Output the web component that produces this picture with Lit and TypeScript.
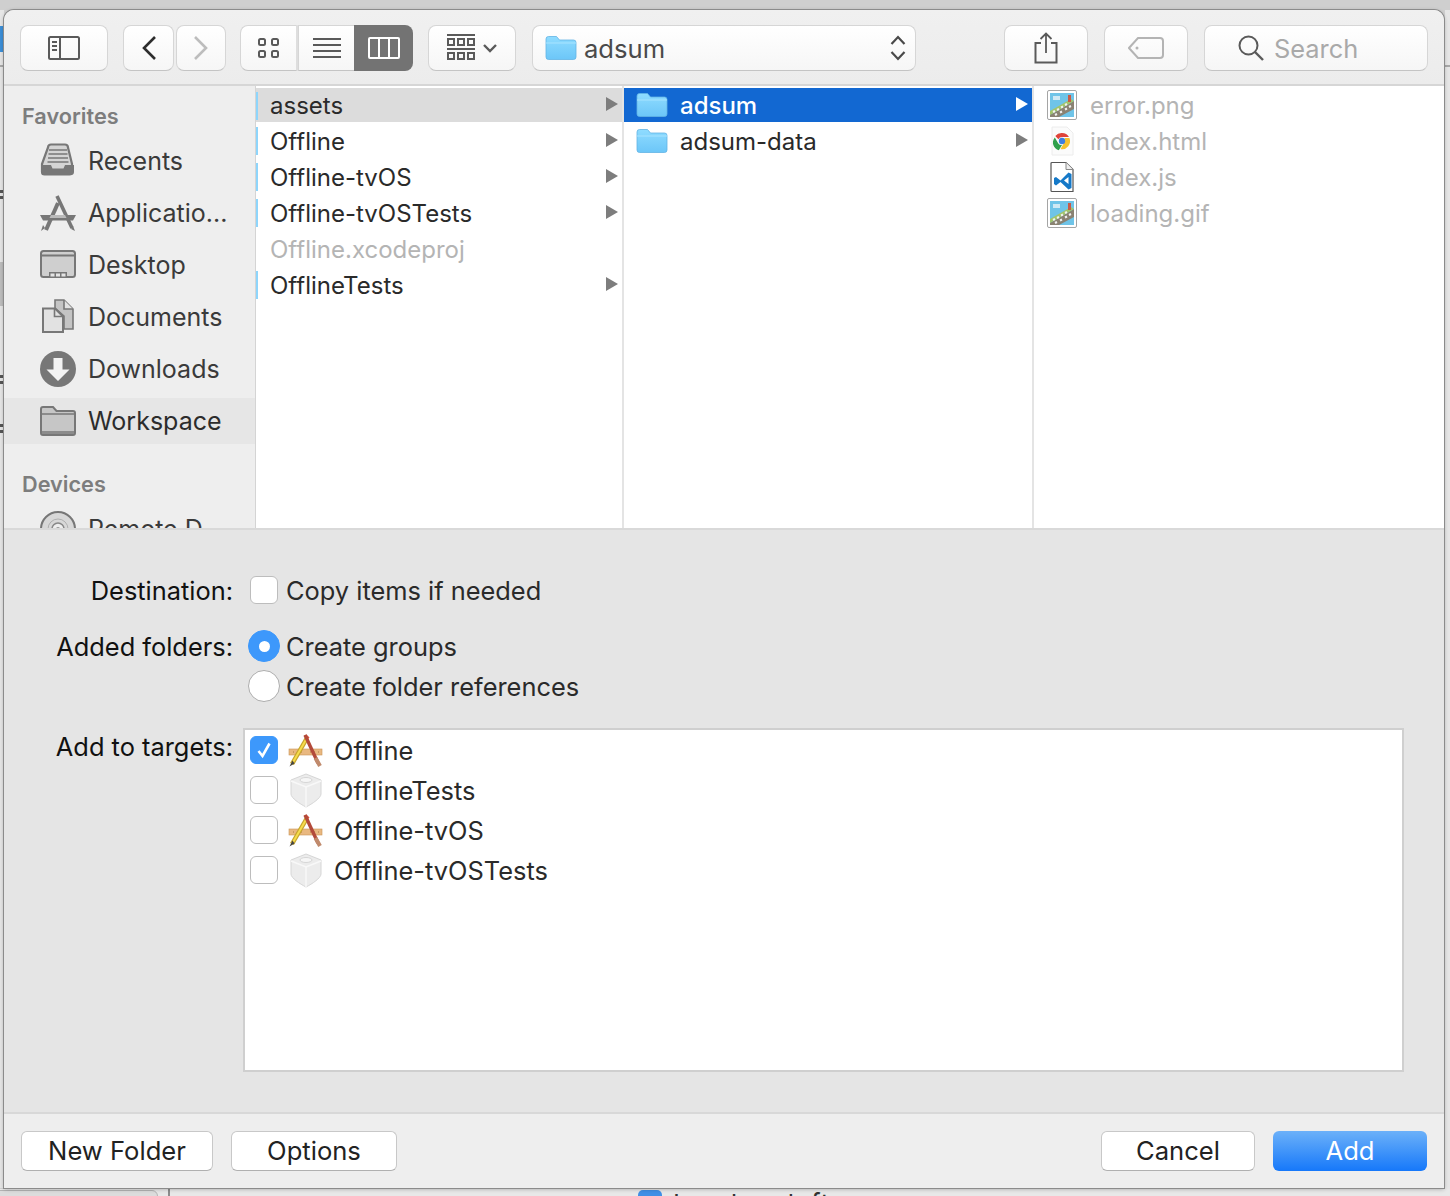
import { LitElement, html, css, svg } from "lit";
import { customElement } from "lit/decorators.js";

const folderBlue = html`<svg width="32" height="26" viewBox="0 0 32 26"><defs><linearGradient id="fb" x1="0" y1="0" x2="0" y2="1"><stop offset="0" stop-color="#8fdcff"/><stop offset="1" stop-color="#6cc6f8"/></linearGradient></defs><path d="M1 4a2.500 2.500 0 0 1 2.500-2.500h8L14.500 5H28.500A2.500 2.500 0 0 1 31 7.500V22a2.500 2.500 0 0 1-2.500 2.500h-25A2.500 2.500 0 0 1 1 22Z" fill="url(#fb)" stroke="#62b4e4" stroke-width=".8"/><path d="M1 8h30" stroke="#a8e4ff" stroke-width="1"/></svg>`;

const sideIcons: Record<string, unknown> = {
  recents: svg`<path d="M8 4.500a3 3 0 0 1 3-3h14a3 3 0 0 1 3 3L32 21v8a2.500 2.500 0 0 1-2.500 2.500h-25A2.500 2.500 0 0 1 2 29v-8Z" fill="#d4d4d4" stroke="#777" stroke-width="2.200"/><path d="M9 7h18M8.500 11h19M8 15h20M7.500 19h21" stroke="#777" stroke-width="1.600"/><path d="M2 22h9l1.500 3.500h11L25 22h9v7a3 3 0 0 1-3 3H5a3 3 0 0 1-3-3Z" fill="#777"/>`,
  apps: svg`<path d="M0 20h36l-3 5.500H3Z" fill="#777"/><path d="M18 8 6 35" stroke="#777" stroke-width="4"/><path d="M17 1 32 33" stroke="#777" stroke-width="3.600"/><path d="M3 30 1 36l4-3ZM33 31l2 5-4-2Z" fill="#777"/><path d="M11 20h14l1.500 3h-17Z" fill="#bbb"/>`,
  desktop: svg`<rect x="1" y="4" width="34" height="26" rx="2.500" fill="#cfcfcf" stroke="#777" stroke-width="2"/><path d="M1 8.500h34" stroke="#777" stroke-width="2.200"/><path d="M9 25h18v5H9Z" fill="#777"/><path d="M10.500 26.500h4v3h-4zM16 26.500h4v3h-4zM21.500 26.500h4v3h-4z" fill="#e4e4e4"/>`,
  docs: svg`<path d="M15 1h9l9 9v20H24V17l-9-8Z" fill="#c4c4c4" stroke="#777" stroke-width="1.600"/><path d="M24 1v9h9" fill="#e2e2e2" stroke="#777" stroke-width="1.600"/><path d="M3 9.500h12l8 8V33H3Z" fill="#e2e2e2" stroke="#777" stroke-width="2"/><path d="M14.500 9.500v8h8.500" fill="none" stroke="#777" stroke-width="1.600"/>`,
  downloads: svg`<circle cx="18" cy="18" r="18" fill="#777"/><path d="M13.500 7h9v11.500h7L18 30 6.500 18.500h7Z" fill="#f3f3f3"/>`,
  folder: svg`<path d="M1 6a2 2 0 0 1 2-2h10l3.500 4H33a2 2 0 0 1 2 2v20a2 2 0 0 1-2 2H3a2 2 0 0 1-2-2Z" fill="#c6c6c6" stroke="#777" stroke-width="2"/><path d="M1 11h34" stroke="#777" stroke-width="1.600"/><path d="M2 28h32v3H2Z" fill="#8c8c8c"/>`,
  disc: svg`<circle cx="18" cy="18" r="17" fill="#d8d8d8" stroke="#777" stroke-width="2"/><circle cx="18" cy="18" r="10" fill="none" stroke="#b0b0b0" stroke-width="1"/><circle cx="18" cy="18" r="6" fill="#eee" stroke="#888" stroke-width="1.500"/><circle cx="18" cy="18" r="2" fill="#999"/>`,
};

const sideIcon = (k: string) => html`<svg class="sicon" width="36" height="36" viewBox="0 0 36 36">${sideIcons[k]}</svg>`;

const thumb = html`<svg width="30" height="30" viewBox="0 0 30 30"><rect x=".5" y=".5" width="29" height="29" rx="1.500" fill="#fff" stroke="#a5a5a5"/><rect x="3" y="3" width="24" height="24" fill="#6fc4e8"/><path d="M3 25 27 11v8L12 27H3Z" fill="#8a8272"/><path d="M3 21 24 9l3 2L3 25Z" fill="#a3c46a"/><path d="M6 22l2-1M10 20l2-1M14 17.500l2-1M18 15l2-1M8 25l2-1M13 22.500l2-1M18 19.500l2-1M22 17l2-1" stroke="#f2f2f2" stroke-width="2"/><rect x="21" y="5" width="3" height="7" fill="#c95a46"/><path d="M6 6h7v4H6Z" fill="#cfe9f4"/></svg>`;

const chromeIcon = html`<svg width="30" height="30" viewBox="0 0 30 30"><path d="M5 1h15l6 6v22H5Z" fill="#fbfbfb" stroke="#ececec"/><path d="M15 7a8 8 0 0 1 7 4h-7a4 4 0 0 0-3.600 2.300L8.300 10A8 8 0 0 1 15 7Z" fill="#e0443a"/><path d="M7.800 11.500l3.500 6A4 4 0 0 0 15 19l-3.200 5.300A8 8 0 0 1 7.800 11.500Z" fill="#2fa04c"/><path d="M22.400 12a8 8 0 0 1-8.900 11l3.500-6a4 4 0 0 0 .300-5Z" fill="#f6c22d"/><circle cx="15" cy="15" r="3.200" fill="#3c7fe0"/></svg>`;

const codeIcon = html`<svg width="30" height="32" viewBox="0 0 30 32"><path d="M5 1.500h14l7 7V30.500H5a1 1 0 0 1-1-1V2.500a1 1 0 0 1 1-1Z" fill="#fff" stroke="#555" stroke-width="1.200"/><path d="M19 1.500v7h7" fill="#eee" stroke="#888"/><path d="M21.500 11.500 24.500 13v14l-3 1.500-8-7.500-4.500 3.500L7 23V17l2-1 4.500 3.500ZM21.500 16l-4.500 3.500 4.500 3.500Z" fill="#1579c8" fill-rule="evenodd"/></svg>`;

const appIcon = html`<svg class="t" width="36" height="34" viewBox="0 0 36 34"><rect x="1" y="16" width="33" height="6" fill="#e9b880" stroke="#c99458" stroke-width=".6"/><path d="M5 19h1M9 19h1M13 19h1M22 19h1M26 19h1M30 19h1" stroke="#a87a44"/><path d="M19 5 4 31" stroke="#c7a52e" stroke-width="4.500"/><path d="M19 5 4 31" stroke="#f6dc4c" stroke-width="2"/><path d="M4.500 27.500 1.500 33.500l5-3Z" fill="#444"/><path d="M20 6 16 2.500l2.500-1 3 3Z" fill="#d84c3c"/><path d="M17 2 30 30" stroke="#b34a3a" stroke-width="3.400"/><path d="M27.500 25 32 33" stroke="#c08a6c" stroke-width="4"/></svg>`;

const testIcon = html`<svg class="t" width="36" height="36" viewBox="0 0 36 36"><path d="M18 2 33 8v14c0 4-9 10-15 13C12 32 3 26 3 22V8Z" fill="#ececec" stroke="#d6d6d6"/><path d="M3 9l15 6 15-6M18 15v20" fill="none" stroke="#f8f8f8" stroke-width="1.500"/><ellipse cx="18" cy="8" rx="6" ry="2.500" fill="#f6f6f6" stroke="#d6d6d6"/></svg>`;

@customElement("app-root")
export class AppRoot extends LitElement {
  static styles = css`
    :host { display: block; width: 1450px; height: 1196px; position: relative; overflow: hidden; background: #cfcfcf; font-family: "Inter", "Roboto", "Liberation Sans", sans-serif; }
    * { box-sizing: border-box; }
    .bg { position: absolute; inset: 0; overflow: hidden; }
    .bg span { position: absolute; display: block; }
    .bg .tab { left: -6px; top: 1190px; width: 164px; height: 20px; background: #dcdcdc; border: 1px solid #b4b4b4; border-radius: 6px; }
    .bg .vl { left: 168px; top: 1189px; width: 2px; height: 7px; background: #8c8c8c; }
    .bg .cb { left: 638px; top: 1190px; width: 24px; height: 20px; background: #3f8fe6; border-radius: 5px; }
    .bg .under { left: 673px; top: 1189px; font-size: 26px; line-height: 30px; color: #333; letter-spacing: 1px; white-space: nowrap; }
    .bg .blue { left: 0; top: 26px; width: 4px; height: 26px; background: #3c8fd8; }
    .bg .lt { left: 0; top: 10px; width: 4px; height: 1178px; background: #e6e6e6; }
    .bg .mk { left: 0; width: 4px; height: 3px; background: #555; }
    .bg .gr { left: 0; top: 262px; width: 4px; height: 44px; background: #bdbdbd; }
    .bg .rl { left: 1445px; top: 10px; width: 5px; height: 1186px; background: #e6e6e6; }
    .bg .rm { left: 1445px; top: 65px; width: 5px; height: 2px; background: #a8a8a8; }
    .bg .lm { left: 0; top: 65px; width: 4px; height: 2px; background: #a8a8a8; }
    .bg .bot { left: 0; top: 1189px; width: 1450px; height: 7px; background: #e8e8e8; }

    .dialog { position: absolute; left: 4px; top: 10px; width: 1440px; height: 1178px; background: #eee; border-radius: 10px 10px 0 0; display: flex; flex-direction: column; overflow: hidden; box-shadow: 0 0 0 1px #8b8b8b, 0 1px 4px rgba(0,0,0,.3); color: #262626; }

    .toolbar { height: 76px; flex: none; display: flex; align-items: flex-start; padding: 15px 0 0 16px; background: linear-gradient(#f0f0f0, #ececec); border-bottom: 2px solid #d6d6d6; }
    .btn { height: 46px; flex: none; display: flex; align-items: center; justify-content: center; background: linear-gradient(#fff, #f6f6f6); border: 1px solid #d6d6d6; border-bottom-color: #c4c4c4; border-radius: 8px; }
    .b-side { width: 88px; }
    .b-back { width: 51px; margin-left: 15px; }
    .b-fwd { width: 50px; margin-left: 2px; }
    .seg { display: flex; margin-left: 14px; height: 46px; flex: none; }
    .seg .btn { border-radius: 0; border-right: none; }
    .seg .s1 { width: 58px; border-radius: 8px 0 0 8px; border-right: 2px solid #dedede; }
    .seg .s2 { width: 56px; }
    .seg .s3 { width: 59px; background: #737373; border: none; border-radius: 0 8px 8px 0; }
    .b-arr { width: 88px; margin-left: 15px; gap: 8px; }
    .b-path { width: 384px; margin-left: 16px; justify-content: flex-start; padding: 0 9px 0 12px; gap: 7px; font-size: 25.6px; color: #4a4a4a; }
    .b-path .name { flex: 1; }
    .b-share { width: 84px; margin-left: 88px; }
    .b-tag { width: 84px; margin-left: 16px; }
    .b-search { width: 224px; margin-left: 16px; justify-content: flex-start; padding-left: 33px; gap: 10px; font-size: 25.4px; color: #a9a9a9; }

    .browser { height: 444px; flex: none; display: flex; background: #fff; border-bottom: 2px solid #d9d9d9; overflow: hidden; }
    .side { width: 252px; flex: none; background: #eee; padding-top: 15px; overflow: hidden; border-right: 1px solid #d4d4d4; }
    .side h4 { margin: 0; padding-left: 18px; font-size: 21.7px; line-height: 30px; font-weight: 600; color: #7d7d7d; }
    .side .first { margin-top: 4px; }
    .side .devices { margin-top: 25px; }
    .sitem { height: 52px; display: flex; align-items: center; padding-left: 36px; gap: 12px; font-size: 25px; color: #3a3a3a; white-space: nowrap; }
    .sitem.sel { background: #e6e6e6; height: 46px; margin-top: 3px; margin-bottom: 3px; color: #2c2c2c; }
    .sitem.clip { margin-top: 4px; }
    .sicon { flex: none; }
    .col { flex: none; border-right: 2px solid #e4e4e4; padding-top: 1px; }
    .c1 { width: 368px; }
    .c2 { width: 410px; }
    .c3 { flex: 1; border-right: none; }
    .row { height: 36px; display: flex; align-items: center; font-size: 24px; color: #2a2a2a; position: relative; white-space: nowrap; }
    .c1 .row { padding-left: 14px; }
    .c1 .row::before { content: ""; position: absolute; left: 0; top: 4px; width: 2px; height: 28px; background: #8ed5fb; }
    .c1 .row.plain::before { display: none; }
    .row.dim { color: #b4b4b4; }
    .row.act { background: #dcdcdc; height: 34px; margin: 1px 0; }
    .row .arrow { position: absolute; right: 4px; top: 10px; width: 0; height: 0; border-left: 12px solid #7d7d7d; border-top: 7px solid transparent; border-bottom: 7px solid transparent; }
    .row.act .arrow { top: 9px; }
    .c2 .row { padding-left: 12px; gap: 12px; }
    .row.hot { background: #1268d2; color: #fff; height: 34px; margin: 1px 0; font-weight: 500; }
    .row.hot .arrow { border-left-color: #fff; top: 9px; }
    .c3 .row { padding-left: 13px; gap: 13px; }
    .c3 .ic { width: 30px; height: 32px; flex: none; display: flex; align-items: center; justify-content: center; }

    .form { flex: 1; background: #e5e5e5; border-bottom: 2px solid #d8d8d8; padding: 41px 40px 0 0; display: grid; grid-template-columns: 229px 1fr; align-content: start; font-size: 25.4px; color: #2a2a2a; }
    .lab { height: 38px; display: flex; align-items: center; justify-content: flex-end; white-space: nowrap; color: #111; }
    .ctl { display: flex; align-items: center; gap: 8px; height: 38px; white-space: nowrap; padding-left: 17px; }
    .cbx { width: 28px; height: 28px; flex: none; background: #fff; border: 1px solid #bdbdbd; border-radius: 6px; display: flex; align-items: center; justify-content: center; }
    .cbx.on { background: #3d98fb; border-color: #3d98fb; }
    .rad { width: 32px; height: 32px; flex: none; margin-left: -2px; margin-right: -2px; background: #fff; border: 1px solid #adadad; border-radius: 50%; display: flex; align-items: center; justify-content: center; }
    .rad.on { background: #3d98fb; border-color: #3d98fb; }
    .rad.on i { display: block; width: 11px; height: 11px; background: #fff; border-radius: 50%; }
    .gapa { margin-top: 18px; }
    .gapb { margin-top: 2px; }
    .list { margin-top: 23px; margin-left: 10px; height: 344px; background: #fff; border: 2px solid #cfcfcf; padding: 0 0 0 5px; }
    .lab.top { margin-top: 22px; }
    .lrow { height: 40px; display: flex; align-items: center; white-space: nowrap; }
    .lrow .cbx { margin-right: 10px; }
    .lrow .t { flex: none; margin-right: 10px; }

    .footer { flex: none; height: 74px; background: #eee; display: flex; align-items: flex-start; padding: 17px 17px 0 17px; }
    .fb { height: 40px; display: flex; align-items: center; justify-content: center; padding-bottom: 2px; background: #fff; border: 1px solid #c8c8c8; border-bottom-color: #b0b0b0; border-radius: 6px; font-size: 25.6px; color: #222; flex: none; }
    .fb.new { width: 192px; }
    .fb.opt { width: 166px; margin-left: 18px; }
    .fb.can { width: 154px; margin-left: auto; }
    .fb.add { width: 154px; margin-left: 18px; color: #fff; border: none; background: linear-gradient(#6cb1f9, #1678fa); }
  `;

  render() {
    const g = "#5a5a5a";
    return html`
      <div class="bg">
        <span class="lt"></span><span class="rl"></span><span class="bot"></span>
        <span class="blue"></span><span class="gr"></span><span class="rm"></span><span class="lm"></span>
        <span class="mk" style="top:190px"></span><span class="mk" style="top:196px"></span>
        <span class="mk" style="top:375px"></span><span class="mk" style="top:381px"></span>
        <span class="mk" style="top:424px"></span><span class="mk" style="top:430px"></span>
        <span class="tab"></span><span class="vl"></span><span class="cb"></span>
        <span class="under">Load on left</span>
      </div>
      <div class="dialog">
        <div class="toolbar">
          <div class="btn b-side"><svg width="32" height="24" viewBox="0 0 32 24"><rect x="1" y="1" width="30" height="22" rx="1.500" fill="none" stroke="${g}" stroke-width="2"/><path d="M12 1v22" stroke="${g}" stroke-width="2"/><path d="M4 6h5M4 10h5M4 14h5" stroke="${g}" stroke-width="2"/></svg></div>
          <div class="btn b-back"><svg width="16" height="26" viewBox="0 0 16 26"><path d="M14 2 3 13l11 11" fill="none" stroke="#2d2d2d" stroke-width="2.600"/></svg></div>
          <div class="btn b-fwd"><svg width="16" height="26" viewBox="0 0 16 26"><path d="M2 2l11 11L2 24" fill="none" stroke="#bdbdbd" stroke-width="2.600"/></svg></div>
          <div class="seg">
            <div class="btn s1"><svg width="22" height="22" viewBox="0 0 22 22"><g fill="none" stroke="${g}" stroke-width="2"><rect x="1" y="2" width="6" height="6" rx="1.500"/><rect x="14" y="2" width="6" height="6" rx="1.500"/><rect x="1" y="14" width="6" height="6" rx="1.500"/><rect x="14" y="14" width="6" height="6" rx="1.500"/></g></svg></div>
            <div class="btn s2"><svg width="28" height="22" viewBox="0 0 28 22"><path d="M0 2h28M0 8h28M0 14h28M0 20h28" stroke="${g}" stroke-width="2"/></svg></div>
            <div class="btn s3"><svg width="32" height="22" viewBox="0 0 32 22"><rect x="1" y="1" width="30" height="20" rx="1" fill="none" stroke="#fff" stroke-width="2"/><path d="M11 1v20M21 1v20" stroke="#fff" stroke-width="2"/></svg></div>
          </div>
          <div class="btn b-arr"><svg width="28" height="28" viewBox="0 0 28 28"><path d="M0 1h28M0 15h28" stroke="${g}" stroke-width="2"/><g fill="none" stroke="${g}" stroke-width="2"><rect x="1" y="5" width="6" height="6"/><rect x="11" y="5" width="6" height="6"/><rect x="21" y="5" width="6" height="6"/><rect x="1" y="19" width="6" height="6"/><rect x="11" y="19" width="6" height="6"/><rect x="21" y="19" width="6" height="6"/></g></svg><svg width="14" height="10" viewBox="0 0 14 10"><path d="M1 2l6 6 6-6" fill="none" stroke="${g}" stroke-width="2.400"/></svg></div>
          <div class="btn b-path">${folderBlue}<span class="name">adsum</span><svg width="16" height="28" viewBox="0 0 16 28"><path d="M1.500 10 8 3l6.500 7M1.500 18 8 25l6.500-7" fill="none" stroke="#4a4a4a" stroke-width="2.200"/></svg></div>
          <div class="btn b-share"><svg width="24" height="32" viewBox="0 0 24 32"><path d="M7 11H1.500v19.500h21V11H17" fill="none" stroke="${g}" stroke-width="2"/><path d="M12 21V2M6.500 7 12 1.500 17.500 7" fill="none" stroke="${g}" stroke-width="1.800"/></svg></div>
          <div class="btn b-tag"><svg width="36" height="22" viewBox="0 0 36 22"><path d="M10 1h22a3 3 0 0 1 3 3v14a3 3 0 0 1-3 3H10L1 11Z" fill="none" stroke="#b4b4b4" stroke-width="2"/><circle cx="9" cy="11" r="1.500" fill="#b4b4b4"/></svg></div>
          <div class="btn b-search"><svg width="26" height="26" viewBox="0 0 26 26"><circle cx="10.500" cy="10.500" r="9" fill="none" stroke="${g}" stroke-width="2"/><path d="m17 17 8 8" stroke="${g}" stroke-width="2.400"/></svg><span>Search</span></div>
        </div>

        <div class="browser">
          <div class="side">
            <h4>Favorites</h4>
            <div class="sitem first">${sideIcon("recents")}<span>Recents</span></div>
            <div class="sitem">${sideIcon("apps")}<span>Applicatio...</span></div>
            <div class="sitem">${sideIcon("desktop")}<span>Desktop</span></div>
            <div class="sitem">${sideIcon("docs")}<span>Documents</span></div>
            <div class="sitem">${sideIcon("downloads")}<span>Downloads</span></div>
            <div class="sitem sel">${sideIcon("folder")}<span>Workspace</span></div>
            <h4 class="devices">Devices</h4>
            <div class="sitem clip">${sideIcon("disc")}<span>Remote D...</span></div>
          </div>
          <div class="col c1">
            <div class="row act">assets<i class="arrow"></i></div>
            <div class="row">Offline<i class="arrow"></i></div>
            <div class="row">Offline-tvOS<i class="arrow"></i></div>
            <div class="row">Offline-tvOSTests<i class="arrow"></i></div>
            <div class="row dim plain">Offline.xcodeproj</div>
            <div class="row">OfflineTests<i class="arrow"></i></div>
          </div>
          <div class="col c2">
            <div class="row hot">${folderBlue}<span>adsum</span><i class="arrow"></i></div>
            <div class="row">${folderBlue}<span>adsum-data</span><i class="arrow"></i></div>
          </div>
          <div class="col c3">
            <div class="row dim"><span class="ic">${thumb}</span><span>error.png</span></div>
            <div class="row dim"><span class="ic">${chromeIcon}</span><span>index.html</span></div>
            <div class="row dim"><span class="ic">${codeIcon}</span><span>index.js</span></div>
            <div class="row dim"><span class="ic">${thumb}</span><span>loading.gif</span></div>
          </div>
        </div>

        <div class="form">
          <div class="lab">Destination:</div>
          <div class="ctl"><span class="cbx"></span><span>Copy items if needed</span></div>
          <div class="lab gapa">Added folders:</div>
          <div class="ctl gapa"><span class="rad on"><i></i></span><span>Create groups</span></div>
          <div class="lab gapb"></div>
          <div class="ctl gapb"><span class="rad"></span><span>Create folder references</span></div>
          <div class="lab top">Add to targets:</div>
          <div class="list">
            <div class="lrow"><span class="cbx on"><svg width="18" height="18" viewBox="0 0 18 18"><path d="M3.500 10 7.500 15 14.500 2.500" fill="none" stroke="#fff" stroke-width="2.600"/></svg></span>${appIcon}<span>Offline</span></div>
            <div class="lrow"><span class="cbx"></span>${testIcon}<span>OfflineTests</span></div>
            <div class="lrow"><span class="cbx"></span>${appIcon}<span>Offline-tvOS</span></div>
            <div class="lrow"><span class="cbx"></span>${testIcon}<span>Offline-tvOSTests</span></div>
          </div>
        </div>

        <div class="footer">
          <div class="fb new">New Folder</div>
          <div class="fb opt">Options</div>
          <div class="fb can">Cancel</div>
          <div class="fb add">Add</div>
        </div>
      </div>
    `;
  }
}
